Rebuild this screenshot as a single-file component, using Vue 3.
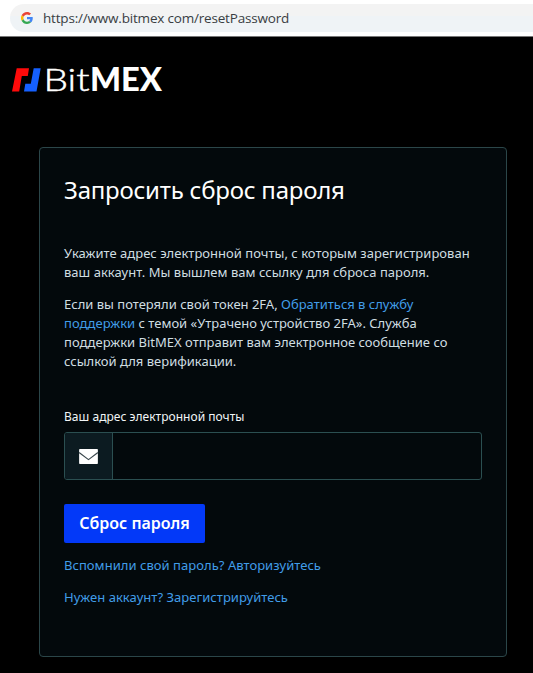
<script setup>
import { ref } from 'vue'

const email = ref('')
</script>

<template>
  <div class="page">
    <header class="browser-bar">
      <div class="address">
        <svg class="google" viewBox="0 0 48 48" aria-hidden="true">
          <path fill="#ea4335" d="M24 9.5c3.5 0 6.700 1.200 9.200 3.600l6.900-6.900C35.900 2.400 30.500 0 24 0 14.600 0 6.500 5.400 2.600 13.200l8 6.200C12.400 13.700 17.700 9.500 24 9.500z" />
          <path fill="#4285f4" d="M47 24.600c0-1.600-.2-3.100-.4-4.600H24v9h12.900c-.6 3-2.200 5.500-4.700 7.200l7.700 6C44.400 38 47 31.800 47 24.600z" />
          <path fill="#fbbc05" d="M10.500 28.600a14.500 14.500 0 0 1 0-9.200l-8-6.200a24 24 0 0 0 0 21.600z" />
          <path fill="#34a853" d="M24 48c6.500 0 11.900-2.100 15.900-5.800l-7.700-6c-2.200 1.500-4.900 2.300-8.200 2.300-6.300 0-11.600-4.200-13.500-9.900l-8 6.200C6.500 42.600 14.600 48 24 48z" />
        </svg>
        <span class="url">https://www.bitmex com/resetPassword</span>
      </div>
    </header>

    <main class="content">
      <svg class="logo" viewBox="0 0 152 40" role="img" aria-label="BitMEX">
        <path fill="#ff0a0a" d="M4.700 8.200H17L15.800 16H9.800L7.200 31.500H0z" />
        <path fill="#1560ff" d="M21.700 8.200h7L24.500 31.500H12l1.300-7.800h5.500z" />
        <text class="logo-light" x="31.500" y="31" textLength="46" lengthAdjust="spacingAndGlyphs">Bit</text>
        <text class="logo-bold" x="78" y="31" textLength="72" lengthAdjust="spacingAndGlyphs">MEX</text>
      </svg>

      <section class="card">
        <h1>Запросить сброс пароля</h1>
        <p class="lead">
          Укажите адрес электронной почты, с которым зарегистрирован<br />
          ваш аккаунт. Мы вышлем вам ссылку для сброса пароля.
        </p>
        <p class="help">
          Если вы потеряли свой токен 2FA, <a>Обратиться в службу<br />
          поддержки</a> с темой «Утрачено устройство 2FA». Служба<br />
          поддержки BitMEX отправит вам электронное сообщение со<br />
          ссылкой для верификации.
        </p>
        <form @submit.prevent>
          <label for="email">Ваш адрес электронной почты</label>
          <div class="field">
            <span class="addon">
              <svg viewBox="0 0 20 16" aria-hidden="true">
                <rect width="20" height="16" rx="0.800" fill="#fff" />
                <path d="M0 3.800 10 11.300 20 3.800" fill="none" stroke="#3a484e" stroke-width="1.200" />
              </svg>
            </span>
            <input id="email" v-model="email" type="email" />
          </div>
          <button type="submit">Сброс пароля</button>
        </form>
        <a class="link">Вспомнили свой пароль? Авторизуйтесь</a>
        <a class="link">Нужен аккаунт? Зарегистрируйтесь</a>
      </section>
    </main>
  </div>
</template>

<style>
body {
  background: #000;
}
</style>

<style scoped>
.page {
  height: 673px;
  overflow: hidden;
  background: #000;
  font-family: "Noto Sans", "Open Sans", sans-serif;
}
.browser-bar {
  box-sizing: border-box;
  height: 37px;
  padding: 4px 0 4px 10px;
  background: #fff;
  border-bottom: 1px solid #777;
}
.address {
  display: flex;
  align-items: center;
  height: 28px;
  padding-left: 11px;
  border-radius: 14px 0 0 14px;
  background: linear-gradient(#f3f3f3 0 12px, #eff3f6 12px);
}
.google {
  width: 12px;
  height: 12px;
  margin-right: 10px;
}
.url {
  font-family: "Open Sans", sans-serif;
  font-size: 13.500px;
  letter-spacing: -0.190px;
  color: #3a3d41;
  white-space: nowrap;
}
.content {
  padding: 23px 26px 0 12px;
}
.logo {
  display: block;
  width: 152px;
  height: 40px;
}
.logo-light,
.logo-bold {
  font-family: Lato, sans-serif;
  font-size: 32px;
  fill: #fff;
}
.logo-light {
  font-weight: 300;
  stroke: #fff;
  stroke-width: 0.500px;
}
.logo-bold {
  font-weight: 900;
}
.card {
  box-sizing: border-box;
  width: 468px;
  height: 510px;
  margin: 47px 0 0 27px;
  padding: 25px 24px 0;
  border: 1px solid #2b4649;
  border-radius: 4px;
  background: #03090c;
  white-space: nowrap;
}
h1 {
  margin: 0;
  font-size: 24px;
  letter-spacing: -0.220px;
  line-height: 34px;
  font-weight: 400;
  color: #fff;
}
p {
  margin: 0;
  font-size: 13px;
  line-height: 19px;
  color: #d0dee2;
}
.lead {
  margin-top: 37px;
  letter-spacing: 0.020px;
}
.help {
  margin-top: 13px;
}
a {
  color: #419de8;
}
label {
  display: block;
  margin-top: 37px;
  font-size: 12px;
  letter-spacing: 0.030px;
  line-height: 18px;
  color: #f2f6f7;
}
.field {
  box-sizing: border-box;
  display: flex;
  width: 418px;
  height: 48px;
  margin-top: 6px;
  border: 1px solid #2b4f51;
  border-radius: 3px;
  overflow: hidden;
}
.addon {
  display: flex;
  align-items: center;
  justify-content: center;
  width: 47px;
  border-right: 1px solid #2b4f51;
  background: #0c1b21;
}
.addon svg {
  width: 19px;
  height: 15px;
}
input {
  flex: 1;
  border: 0;
  outline: 0;
  background: transparent;
  color: #fff;
}
button {
  display: block;
  width: 141px;
  height: 39px;
  margin-top: 24px;
  padding: 0 0 2px;
  border: 0;
  border-radius: 2px;
  background: #0339f8;
  font-family: inherit;
  font-size: 16px;
  font-weight: 600;
  color: #fff;
}
.link {
  display: block;
  margin-top: 13px;
  font-size: 13px;
  letter-spacing: 0.040px;
  line-height: 19px;
}
</style>
